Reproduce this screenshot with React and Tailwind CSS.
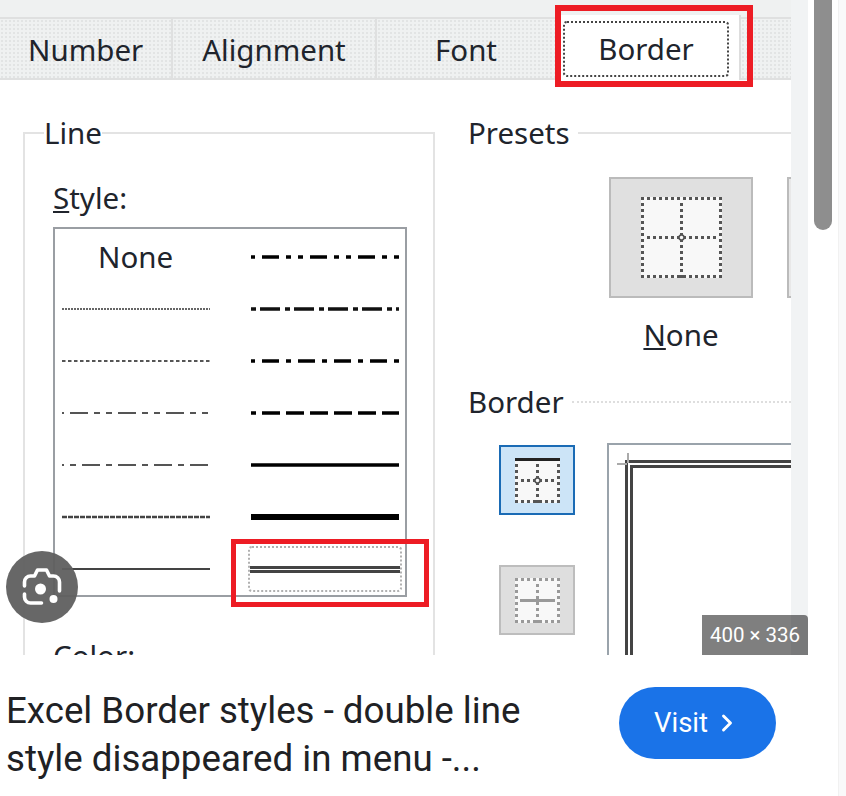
import { ChevronRight } from 'lucide-react';

const leftLines = [
  { kind: 'none' },
  { stroke: 2, color: '#666', dash: '2 1' },
  { stroke: 2, color: '#555', dash: '3.5 2.5' },
  { stroke: 2, color: '#555', dash: '18 6 6 6 6 6', offset: 40 },
  { stroke: 2, color: '#555', dash: '18 6 6 6', offset: 16 },
  { stroke: 2.5, color: '#444', dash: '5 1' },
  { stroke: 2, color: '#444' },
];

const rightLines = [
  { stroke: 3.5, color: '#000', dash: '17 7 5 7 5 7', offset: 37 },
  { stroke: 3.5, color: '#111', dash: '20 5 5 4', offset: 25 },
  { stroke: 3.5, color: '#000', dash: '17 7 5 7', offset: 25 },
  { stroke: 3.5, color: '#000', dash: '18 6', offset: 13 },
  { stroke: 3.5, color: '#000' },
  { stroke: 6, color: '#000' },
];

const LineSample = ({ stroke, color, dash, offset = 0 }) => (
  <svg width="150" height="10" className="block">
    <line x1="1" y1="5" x2="149" y2="5" stroke={color} strokeWidth={stroke} strokeDasharray={dash} strokeDashoffset={offset} />
  </svg>
);

// dotted border glyph, one small square every 6px like the Excel buttons
const DotGrid = ({ cells, solidTop, solidMiddle, color = '#555', center = true }) => {
  const size = cells * 6 + 3;
  const mid = (cells * 6) / 2;
  const steps = Array.from({ length: cells + 1 }, (_, i) => i * 6);
  const dots = [];
  steps.forEach((p) => {
    if (!solidTop) dots.push([p, 0]);
    dots.push([p, size - 3]);
    if (p > 0) {
      dots.push([0, p], [size - 3, p], [mid, p]);
    }
    if (!solidMiddle && p > 0 && p < size - 3) dots.push([p, mid]);
  });
  return (
    <svg width={size} height={size} className="block">
      <rect width={size} height={size} fill="#f8f8f8" />
      {dots.map(([x, y]) => (
        <rect key={`${x}-${y}`} x={x} y={y} width="3" height="3" fill={color} />
      ))}
      {solidTop && <rect x="0" y="0" width={size} height="3" fill="#222" />}
      {solidMiddle && <rect x="5" y={mid} width={size - 10} height="3" fill="#999" />}
      {center && <circle cx={mid + 1.5} cy={mid + 1.5} r="2.5" fill="#f8f8f8" stroke={color} strokeWidth="1.5" />}
    </svg>
  );
};

const SectionTitle = ({ children, dotted }) => (
  <div className="flex items-center gap-2">
    <span className="text-[29.5px] leading-8">{children}</span>
    <div className={`h-0 flex-1 border-t-2 ${dotted ? 'border-dotted border-[#dedede]' : 'border-[#e3e3e3]'}`} />
  </div>
);

const LensIcon = () => (
  <svg width="72" height="72" viewBox="0 0 72 72" fill="none" stroke="white" strokeWidth="3.6" strokeLinecap="round" strokeLinejoin="round">
    <path d="M18.5 35v-4a6 6 0 0 1 6-6h4l3-6h9l3 6h4a6 6 0 0 1 6 6v9" />
    <path d="M18.5 43v3a6 6 0 0 0 6 6h11" />
    <circle cx="34.5" cy="38" r="5.5" fill="white" stroke="none" />
    <circle cx="47.5" cy="48" r="4" fill="white" stroke="none" />
  </svg>
);

const Dialog = () => (
  <div className="relative h-[655px] w-[791px] overflow-hidden bg-white font-['Noto_Sans',sans-serif] text-[#20242c]">
    {/* tab strip */}
    <div className="flex h-20 items-end bg-[#eff1f1] text-[29.5px]">
      <div className="flex h-[63px] w-[173px] items-center border-y-2 border-r-2 border-[#dfe0e0] bg-[radial-gradient(#e2e4e4_1px,transparent_1px)] bg-[size:4px_4px] pt-[3px] pl-[28px]">Number</div>
      <div className="flex h-[63px] w-[204px] items-center justify-center border-y-2 border-r-2 border-[#dfe0e0] bg-[radial-gradient(#e2e4e4_1px,transparent_1px)] bg-[size:4px_4px] pt-[3px]">Alignment</div>
      <div className="flex h-[63px] w-[184px] items-center justify-center border-y-2 border-[#dfe0e0] bg-[radial-gradient(#e2e4e4_1px,transparent_1px)] bg-[size:4px_4px] pt-[3px] pr-[6px]">Font</div>
      <div className="flex h-[65px] w-[180px] items-start border-r-2 border-[#dddddd] bg-white pt-[6px]">
        <div className="ml-[2px] flex h-[56px] w-[166px] items-center justify-center rounded-sm border-2 border-dotted border-[#444]">Border</div>
      </div>
      <div className="h-[63px] flex-1 border-y-2 border-[#dfe0e0] bg-[radial-gradient(#e2e4e4_1px,transparent_1px)] bg-[size:4px_4px]" />
    </div>

    <div className="flex items-start pl-[23px]">
      {/* Line group */}
      <fieldset className="mt-[37px] h-[600px] w-[412px] shrink-0 border-2 border-[#e3e3e3] pl-[28px]">
        <legend className="-ml-[9px] text-[29.5px] leading-8">Line</legend>
        <div className="pt-[33px] text-[29.5px] leading-8"><span className="underline">S</span>tyle:</div>
        <div className="mt-[13px] grid h-[370px] w-[354px] grid-cols-[195px_1fr] grid-rows-7 border-2 border-[#9a9ea3] pt-[2px]">
          {leftLines.map((line, i) => [
            <div key={`l${i}`} className="flex items-center pl-[6px]">
              {line.kind === 'none' ? <span className="pl-[37px] text-[29.5px] leading-8">None</span> : <LineSample {...line} />}
            </div>,
            i < 6 ? (
              <div key={`r${i}`} className="flex items-center"><LineSample {...rightLines[i]} /></div>
            ) : (
              <div key={`r${i}`} className="flex items-center">
                <div className="-ml-[2px] flex h-[46px] w-[154px] flex-col items-center justify-center gap-[1px] rounded-sm border-2 border-dotted border-[#b0b0b0]">
                  <div className="h-[3px] w-[150px] bg-[#444]" />
                  <div className="h-[3px] w-[150px] bg-[#444]" />
                </div>
              </div>
            ),
          ])}
        </div>
        <div className="mt-[43px] text-[29.5px] leading-8">Color:</div>
      </fieldset>

      {/* Presets and Border */}
      <div className="ml-[33px] min-w-0 flex-1 pt-[37px]">
        <SectionTitle>Presets</SectionTitle>
        <div className="mt-[28px] ml-[141px] flex gap-[34px]">
          <div className="flex h-[121px] w-[144px] shrink-0 items-center justify-center border-2 border-[#bbbbbb] bg-[#e0e0e0]">
            <DotGrid cells={13} />
          </div>
          <div className="h-[121px] w-[144px] shrink-0 border-2 border-[#bbbbbb] bg-[#e8e8e8]" />
        </div>
        <div className="mt-[21px] ml-[141px] w-[144px] text-center text-[29.5px] leading-8"><span className="underline">N</span>one</div>
        <div className="mt-[35px]">
          <SectionTitle dotted>Border</SectionTitle>
        </div>
        <div className="mt-[25px] ml-[31px] flex gap-[32px]">
          <div className="mt-[2px] flex w-[76px] shrink-0 flex-col gap-[50px]">
            <div className="flex h-[70px] items-center justify-center border-2 border-[#1a6bb5] bg-[#cce4f7]">
              <DotGrid cells={7} solidTop />
            </div>
            <div className="flex h-[70px] items-center justify-center border-2 border-[#bdbdbd] bg-[#dedede]">
              <DotGrid cells={7} solidMiddle color="#999" center={false} />
            </div>
          </div>
          <div className="relative h-[300px] flex-1 border-t-2 border-l-2 border-[#9aa3ab] pt-[15px] pl-[16px]">
            <div className="h-full border-t-[8px] border-l-[8px] border-double border-[#444]" />
            <div className="absolute top-[18px] left-[8px] h-[2px] w-[10px] bg-[#aaa]" />
            <div className="absolute top-[8px] left-[18px] h-[10px] w-[2px] bg-[#aaa]" />
          </div>
        </div>
      </div>
    </div>

    {/* red annotations */}
    <div className="absolute top-[5px] left-[555px] h-[82px] w-[198px] border-[6px] border-[#ed1c24]" />
    <div className="absolute top-[539px] left-[231px] h-[68px] w-[198px] border-[5px] border-[#ed1c24]" />
  </div>
);

export default function App() {
  return (
    <div className="flex h-[796px] w-[846px] overflow-hidden bg-white">
      <div className="relative w-[808px] shrink-0">
        <div className="h-[655px] bg-[#f1f3f4]">
          <Dialog />
        </div>
        <div className="flex items-start justify-between pt-[32px] pr-[32px] pl-[6px] font-['Roboto',sans-serif] text-[#202124]">
          <div className="w-[560px] text-[36.7px] leading-[48px]">Excel Border styles - double line style disappeared in menu -...</div>
          <button className="flex h-[72px] w-[157px] items-center justify-center gap-[5px] rounded-full bg-[#1a73e8] text-[27.5px] text-white">
            Visit
            <ChevronRight className="h-7 w-7" strokeWidth={2.5} />
          </button>
        </div>

        <button className="absolute top-[551px] left-[6px] h-[72px] w-[72px] rounded-full bg-[#5f5f5f]/95">
          <LensIcon />
        </button>
        <div className="absolute top-[615px] right-0 flex h-[40px] w-[106px] items-center justify-center rounded-tr bg-black/50 font-['Roboto',sans-serif] text-[20.5px] text-white">400 × 336</div>
      </div>
      <div className="w-[30px] shrink-0 px-[6px]">
        <div className="h-[230px] rounded-b-full bg-[#8e8e8e]" />
      </div>
      <div className="flex-1 border-l border-[#f1f1f1] bg-[#f9f9fa]" />
    </div>
  );
}
